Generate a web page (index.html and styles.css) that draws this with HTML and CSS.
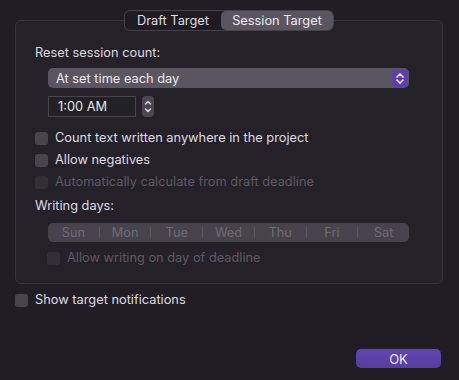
FILE: index.html
```html
<!DOCTYPE html>
<html lang="en">
<head>
    <meta charset="UTF-8">
    <title>Session Target</title>
    <link rel="stylesheet" href="styles.css">
</head>
<body>
<main class="window">
    <div class="box">
        <div class="tabs">
            <span class="tab">Draft Target</span>
            <span class="tab selected">Session Target</span>
        </div>

        <div class="label first">Reset session count:</div>

        <div class="popup">
            <span>At set time each day</span>
            <span class="popup-arrows">
                <svg width="8" height="11" viewBox="0 0 8 11"><path d="M1 4 L4 1 L7 4 M1 7 L4 10 L7 7" fill="none" stroke="#fff" stroke-width="1.5" stroke-linecap="round" stroke-linejoin="round"/></svg>
            </span>
        </div>

        <div class="time-row">
            <div class="time-field">1:00 AM</div>
            <span class="stepper">
                <svg width="8" height="15" viewBox="0 0 8 15"><path d="M1.5 5 L4 2.5 L6.5 5 M1.5 10 L4 12.5 L6.5 10" fill="none" stroke="#e6e4ea" stroke-width="1.3" stroke-linecap="round" stroke-linejoin="round"/></svg>
            </span>
        </div>

        <label class="check first-check"><span class="box-mark"></span>Count text written anywhere in the project</label>
        <label class="check"><span class="box-mark"></span>Allow negatives</label>
        <label class="check disabled"><span class="box-mark"></span>Automatically calculate from draft deadline</label>

        <div class="label days-label">Writing days:</div>

        <div class="days">
            <span>Sun</span><span>Mon</span><span>Tue</span><span>Wed</span><span>Thu</span><span>Fri</span><span>Sat</span>
        </div>

        <label class="check disabled indent"><span class="box-mark"></span>Allow writing on day of deadline</label>
    </div>

    <label class="check notify"><span class="box-mark"></span>Show target notifications</label>

    <div class="footer">
        <button class="ok">OK</button>
    </div>
</main>
</body>
</html>
```

FILE: styles.css
```css
body {
    margin: 0;
    background-color: #211d25;
    font-family: Inter, "Noto Sans", sans-serif;
    font-size: 12.8px;
    color: #dedbe2;
}

.window {
    width: 459px;
    height: 380px;
    display: flex;
    flex-direction: column;
}

.box {
    margin: 20px 16px 0 15px;
    height: 264px;
    box-sizing: border-box;
    border: 1px solid #39353f;
    border-radius: 6px;
    background: #252129;
    padding-left: 19px;
    display: flex;
    flex-direction: column;
}

.tabs {
    align-self: center;
    margin-top: -11px;
    margin-left: -19px;
    display: flex;
    height: 21px;
    box-sizing: border-box;
    border: 1px solid #46424c;
    border-radius: 6px;
    background: #1f1b23;
}

.tab {
    display: flex;
    align-items: center;
    justify-content: center;
    color: #dedbe2;
    line-height: 19px;
}

.tab:first-child {
    width: 96px;
}

.tab.selected {
    width: 112px;
    background: #5a5660;
    border-radius: 5px;
    color: #ecebee;
}

.label {
    line-height: 16px;
}

.label.first {
    margin-top: 14px;
}

.popup {
    margin: 7px 0 0 13px;
    width: 361px;
    height: 20px;
    box-sizing: border-box;
    background: #5a5660;
    border-radius: 5px;
    display: flex;
    align-items: center;
    justify-content: space-between;
    padding: 0 1px 0 8px;
    color: #ebe9ee;
}

.popup-arrows {
    width: 16px;
    height: 17px;
    border-radius: 4px;
    background: #5b3fae;
    display: flex;
    align-items: center;
    justify-content: center;
}

.time-row {
    margin: 8px 0 0 13px;
    display: flex;
    align-items: center;
    gap: 6px;
}

.time-field {
    width: 88px;
    height: 21px;
    box-sizing: border-box;
    border: 1px solid #48464b;
    background: #222123;
    padding-left: 9px;
    line-height: 19px;
    color: #e4e3e6;
}

.stepper {
    width: 12px;
    height: 21px;
    border-radius: 4px;
    background: #4b4751;
    display: flex;
    align-items: center;
    justify-content: center;
}

.check {
    display: flex;
    align-items: center;
    gap: 7px;
    line-height: 16px;
    margin-top: 6px;
    color: #dedbe2;
}

.check.first-check {
    margin-top: 13px;
}

.box-mark {
    width: 13px;
    height: 13px;
    border-radius: 3px;
    background: #48444e;
    flex-shrink: 0;
}

.check.disabled {
    color: #5e5a64;
}

.check.disabled .box-mark {
    background: #332f38;
}

.check.indent {
    margin: 8px 0 0 12px;
}

.days-label {
    margin-top: 8px;
}

.days {
    margin: 9px 0 0 13px;
    width: 361px;
    height: 19px;
    background: #47434d;
    border-radius: 5px;
    display: flex;
    align-items: center;
}

.days span {
    flex: 1;
    text-align: center;
    color: #6e6a74;
    border-left: 1px solid #5a5660;
    line-height: 11px;
}

.days span:first-child {
    border-left: none;
}

.check.notify {
    margin: 8px 0 0 15px;
}

.footer {
    margin-top: auto;
    display: flex;
    justify-content: flex-end;
    padding: 0 18px 12px 0;
}

.ok {
    width: 85px;
    height: 19px;
    border: none;
    border-radius: 5px;
    background: linear-gradient(#6046b0, #573ea0);
    color: #ebe7f5;
    font-family: Inter, "Noto Sans", sans-serif;
    font-size: 13px;
    padding: 0;
}
```
